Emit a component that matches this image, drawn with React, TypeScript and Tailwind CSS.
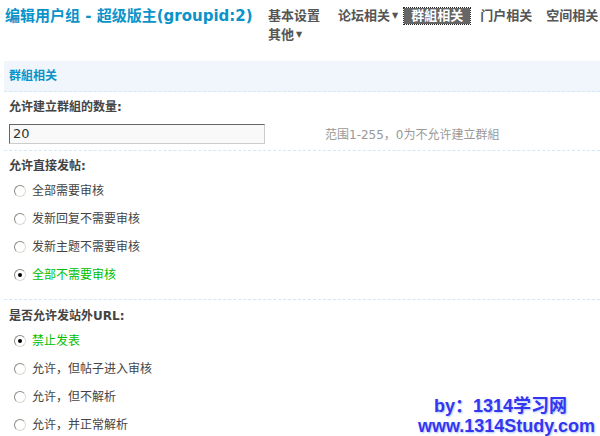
import React from "react";

const CJK = "font-['DejaVu_Sans','Noto_Sans_CJK_SC',sans-serif]";

const NAV = [
  { label: "基本设置", arrow: false, active: false, gap: "mr-[18px]" },
  { label: "论坛相关", arrow: true, active: false, gap: "mr-[6px]" },
  { label: "群組相关", arrow: false, active: true, gap: "mr-[10px]" },
  { label: "门户相关", arrow: false, active: false, gap: "mr-[14px]" },
  { label: "空间相关", arrow: false, active: false, gap: "" },
];

const POST_OPTS = ["全部需要审核", "发新回复不需要审核", "发新主题不需要审核", "全部不需要审核"];
const URL_OPTS = ["禁止发表", "允许，但帖子进入审核", "允许，但不解析", "允许，并正常解析"];

function Radio({ checked, label }: { checked: boolean; label: string }) {
  return (
    <div className="h-[28px] flex items-center pl-[10px]">
      <span className="w-[12px] h-[12px] rounded-full border border-t-[#8c8a80] border-l-[#8c8a80] border-r-[#dcdad2] border-b-[#dcdad2] bg-white flex items-center justify-center">
        {checked && <span className="w-[4px] h-[4px] rounded-full bg-black" />}
      </span>
      <span className={`ml-[6px] text-[12px] ${checked ? "text-[#00c000]" : "text-[#444]"}`}>{label}</span>
    </div>
  );
}

export default function App() {
  return (
    <div className={`w-[600px] h-[436px] bg-white overflow-hidden relative ${CJK}`}>
      {/* Top: title + nav */}
      <div className="h-[61px] flex">
        <h1 className="shrink-0 pl-[5px] pt-[6px] text-[15px] font-bold leading-[20px] text-[#0a93c9] whitespace-nowrap w-[262px]">
          编辑用户组 - 超级版主(groupid:2)
        </h1>
        <div className="pt-[8px] pl-[6px] flex flex-col gap-[3px]">
          <div className="flex items-center whitespace-nowrap">
            {NAV.map((n) => (
              <span
                key={n.label}
                className={`text-[13px] leading-[16px] font-bold ${n.gap} ${
                  n.active ? "bg-[#666] text-white px-[7px] outline-1 outline-dotted outline-[#222]" : "text-[#555]"
                }`}
              >
                {n.label}
                {n.arrow && <span className="text-[8px] ml-[2px] align-top">▼</span>}
              </span>
            ))}
          </div>
          <span className="text-[13px] leading-[16px] font-bold text-[#555]">
            其他<span className="text-[8px] ml-[2px] align-top">▼</span>
          </span>
        </div>
      </div>

      {/* Section header */}
      <div className="ml-[4px] h-[31px] bg-[#f0f6fc] border-b border-dashed border-[#d3e7f7] flex items-center pl-[5px]">
        <span className="text-[12px] font-bold text-[#0a93c9]">群組相关</span>
      </div>

      {/* Group count */}
      <div className="ml-[4px] border-b border-dashed border-[#d3e7f7]">
        <div className="h-[24px] flex items-center pt-[5px] pl-[5px] text-[12px] font-bold text-[#444]">允许建立群組的数量:</div>
        <div className="h-[34px] flex items-start pt-[8px] pl-[5px]">
          <div className="w-[256px] h-[20px] bg-[#f9f9f9] border border-t-[#666] border-l-[#666] border-r-[#ccc] border-b-[#ccc] flex items-center px-[3px] text-[13px] text-[#333]">
            20
          </div>
          <span className="ml-[60px] mt-[2px] text-[12px] text-[#999]">范围1-255，0为不允许建立群組</span>
        </div>
      </div>

      {/* Direct post */}
      <div className="ml-[4px] border-b border-dashed border-[#d3e7f7] pb-[10px]">
        <div className="h-[26px] flex items-center pt-[4px] pl-[5px] text-[12px] font-bold text-[#444]">允许直接发帖:</div>
        {POST_OPTS.map((o, i) => (
          <Radio key={o} label={o} checked={i === 3} />
        ))}
      </div>

      {/* URL */}
      <div className="ml-[4px]">
        <div className="h-[27px] flex items-center pt-[4px] pl-[5px] text-[12px] font-bold text-[#444]">是否允许发站外URL:</div>
        {URL_OPTS.map((o, i) => (
          <Radio key={o} label={o} checked={i === 0} />
        ))}
      </div>

      {/* Watermark */}
      <div className="absolute right-[5px] bottom-0 flex flex-col items-end font-['Liberation_Sans','Noto_Sans_CJK_SC',sans-serif] font-bold text-[18px] leading-[20px] text-[#3535f0] [text-shadow:1px_1px_2px_#a9c8ff]">
        <span className="mr-[28px]">by：1314学习网</span>
        <span>www.1314Study.com</span>
      </div>
    </div>
  );
}
